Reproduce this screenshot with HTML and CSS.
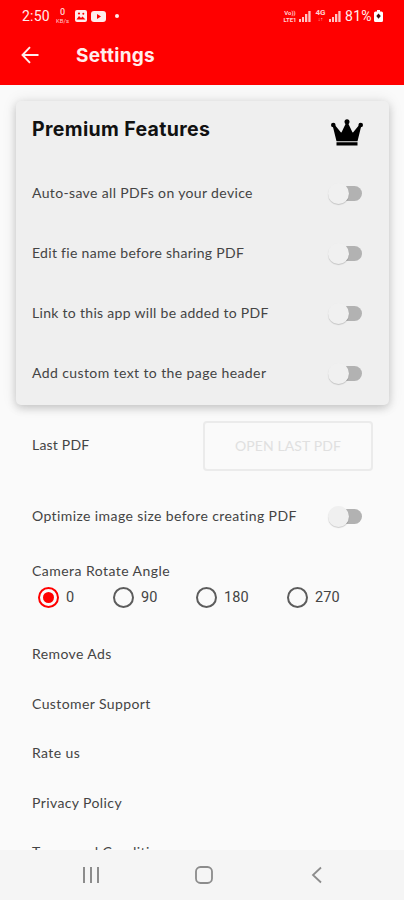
FILE: index.html
```
<!DOCTYPE html>
<html lang="en">
<head>
    <meta charset="UTF-8">
    <meta name="viewport" content="width=device-width, initial-scale=1.0">
    <title>Settings</title>
    <link rel="stylesheet" href="styles.css">
</head>
<body>

<header class="header">
    <div class="status-bar">
        <span class="time">2:50</span>
        <span class="speed"><b>0</b><small>KB/s</small></span>
        <svg class="icon-image" width="12" height="12" viewBox="0 0 12 12">
            <rect width="12" height="12" rx="2" fill="#ffeded"/>
            <path d="M1.5 9.5 4 6l2 2 1.5-1.5 3 3z" fill="#f00"/>
            <circle cx="4" cy="3.5" r="1.1" fill="#f00"/>
            <circle cx="8.3" cy="3.7" r="1" fill="#f00"/>
        </svg>
        <svg class="icon-video" width="15" height="11" viewBox="0 0 15 11">
            <rect width="15" height="11" rx="3" fill="#ffeded"/>
            <path d="M6 3v5l4-2.5z" fill="#f00"/>
        </svg>
        <span class="dot"></span>
        <span class="volte"><span>Vo))</span><span>LTE1</span></span>
        <svg class="signal" width="12" height="12" viewBox="0 0 12 12" fill="#ffc4c4">
            <path d="M0 9h2v3H0zM3 7h2v5H3zM6 4h2.300v8H6zM9.300 1h2.300v11H9.300z"/>
        </svg>
        <span class="net"><b>4G</b><small>↓↑</small></span>
        <svg class="signal signal-2" width="12" height="12" viewBox="0 0 12 12" fill="#ffc4c4">
            <path d="M0 9h2v3H0zM3 7h2v5H3zM6 4h2.300v8H6zM9.300 1h2.300v11H9.300z"/>
        </svg>
        <span class="percent">81%</span>
        <svg class="battery" width="9" height="12" viewBox="0 0 9 12">
            <path d="M3 0h3v1.500h1.500q1.500 0 1.500 1.500v7.500q0 1.500-1.500 1.500h-6Q0 12 0 10.500V3q0-1.500 1.500-1.500H3z" fill="#fff"/>
            <path d="M4.500 3.500 6.800 6 4.500 8.800 2.300 6z" fill="#401010"/>
        </svg>
    </div>
    <div class="toolbar">
        <svg width="18" height="18" viewBox="0 0 18 18" fill="none" stroke="#ffeded" stroke-width="1.900">
            <path d="M17.500 9H2M9 1.200 1.500 9 9 16.800"/>
        </svg>
        <h1>Settings</h1>
    </div>
</header>

<main class="content">
    <section class="card">
        <div class="card-title">
            <h2>Premium Features</h2>
            <svg width="32" height="27" viewBox="0 0 32 27">
                <path d="M1.500 6 3 5l7 8.500h12L29 5l1.500 1-4 16.300h-21z"/>
                <path d="M10 14.500 15 4h2l5 10.500zM5.500 23.300h21V26.500h-21z"/>
                <circle cx="2.300" cy="6" r="2.300"/>
                <circle cx="16" cy="2.700" r="2.500"/>
                <circle cx="29.700" cy="6" r="2.300"/>
            </svg>
        </div>
        <div class="row"><span class="save-label">Auto-save all PDFs on your device</span><span class="switch"></span></div>
        <div class="row"><span class="name-label">Edit fie name before sharing PDF</span><span class="switch"></span></div>
        <div class="row"><span class="link-label">Link to this app will be added to PDF</span><span class="switch"></span></div>
        <div class="row"><span class="header-label">Add custom text to the page header</span><span class="switch"></span></div>
    </section>

    <div class="last-pdf">
        <span>Last PDF</span>
        <button class="open-button" disabled>OPEN LAST PDF</button>
    </div>

    <div class="optimize"><span>Optimize image size before creating PDF</span><span class="switch"></span></div>

    <div class="angle-label">Camera Rotate Angle</div>
    <div class="angles">
        <span class="angle"><i class="radio checked"></i>0</span>
        <span class="angle"><i class="radio"></i>90</span>
        <span class="angle"><i class="radio"></i>180</span>
        <span class="angle"><i class="radio"></i>270</span>
    </div>

    <ul class="links">
        <li>Remove Ads</li>
        <li>Customer Support</li>
        <li>Rate us</li>
        <li>Privacy Policy</li>
        <li>Terms and Conditions</li>
    </ul>
</main>

<nav class="nav-bar">
    <svg width="18" height="18" viewBox="0 0 18 18" fill="none" stroke="#8c8c8c" stroke-width="2">
        <path d="M2 1v16M9 1v16M16 1v16"/>
    </svg>
    <svg width="18" height="18" viewBox="0 0 18 18" fill="none" stroke="#8c8c8c" stroke-width="1.800">
        <rect x="1" y="1" width="16" height="16" rx="4.500"/>
    </svg>
    <svg width="18" height="18" viewBox="0 0 18 18" fill="none" stroke="#8c8c8c" stroke-width="1.800">
        <path d="M13 1.500 5 9l8 7.500"/>
    </svg>
</nav>

</body>
</html>
```
FILE: styles.css
```
* {
    box-sizing: border-box;
}
body {
    margin: 0;
    height: 900px;
    display: flex;
    flex-direction: column;
    overflow: hidden;
    background: #fafafa;
    color: #444;
    font-family: Lato, sans-serif;
    font-size: 14px;
    letter-spacing: 0.4px;
}
svg {
    display: block;
    flex: none;
}
.header {
    flex: none;
    height: 85px;
    background: #ff0000;
    color: #ffeded;
}
.status-bar {
    display: flex;
    align-items: center;
    height: 32px;
    padding-left: 22px;
    font-family: Roboto, sans-serif;
    font-size: 14px;
    letter-spacing: 0;
}
.time {
    width: 33px;
    letter-spacing: 0.2px;
}
.speed, .volte, .net {
    display: flex;
    flex-direction: column;
    align-items: center;
    line-height: 6px;
    font-size: 6px;
    color: #ffd0d0;
}
.speed {
    width: 15px;
}
.speed b {
    font-size: 9px;
    line-height: 9px;
    font-weight: 500;
}
.speed small {
    font-size: 6px;
    line-height: 7px;
}
.icon-image {
    margin-left: 5px;
}
.icon-video {
    margin-left: 4px;
}
.dot {
    width: 4px;
    height: 4px;
    margin-left: 9px;
    border-radius: 50%;
    background: #ffeded;
}
.volte {
    width: 16px;
    margin-left: 163px;
    font-size: 6px;
    line-height: 7px;
    font-weight: 700;
}
.signal {
    margin-left: 1px;
}
.net {
    width: 11px;
    margin-left: 4px;
}
.net b {
    font-size: 8px;
}
.net small {
    font-size: 5px;
}
.signal-2 {
    margin-left: 3px;
}
.percent {
    width: 28px;
    margin-left: 4px;
    letter-spacing: 0.3px;
}
.battery {
    margin-left: 1px;
}
.toolbar {
    display: flex;
    align-items: center;
    height: 46px;
    padding-left: 21px;
}
.toolbar h1 {
    margin: 0 0 0 37px;
    font-family: Inter, sans-serif;
    font-size: 19px;
    font-weight: 700;
    letter-spacing: 0.3px;
}
.content {
    flex: 1;
    min-height: 0;
    overflow: hidden;
    padding: 16px 15px 0 16px;
}
.card {
    height: 304px;
    padding: 0 26px 0 16px;
    border-radius: 5px;
    background: #efefef;
    box-shadow: 0 3px 9px rgba(0, 0, 0, 0.18), 0 0 16px rgba(0, 0, 0, 0.09);
}
.card-title {
    display: flex;
    align-items: center;
    justify-content: space-between;
    height: 62px;
    padding-bottom: 5px;
}
.card-title svg {
    margin-top: 6px;
}
.card-title h2 {
    margin: 0;
    padding-bottom: 2px;
    color: #111;
    font-family: Inter, sans-serif;
    font-size: 19.5px;
    font-weight: 700;
    letter-spacing: 0.35px;
}
.row, .optimize {
    display: flex;
    align-items: center;
    justify-content: space-between;
    height: 60px;
}
.row span:first-child, .optimize span:first-child {
    padding-bottom: 2px;
}
.save-label {
    letter-spacing: 0.36px;
}
.name-label, .link-label {
    letter-spacing: 0.3px;
}
.header-label {
    letter-spacing: 0.4px;
}
/* disabled look: the thumb sits over the left end of the track */
.switch {
    position: relative;
    width: 28px;
    height: 15px;
    margin-right: 1px;
    border-radius: 8px;
    background: #b2b2b2;
}
.switch::before {
    content: "";
    position: absolute;
    left: -6px;
    top: -3px;
    width: 21px;
    height: 21px;
    border-radius: 50%;
    background: #f0f0f0;
    box-shadow: 0 1px 1px rgba(0, 0, 0, 0.18);
}
.last-pdf {
    display: flex;
    align-items: center;
    justify-content: space-between;
    height: 50px;
    margin-top: 16px;
    padding: 0 16px;
    letter-spacing: 0.2px;
}
.last-pdf span {
    padding-bottom: 3px;
}
.open-button {
    width: 170px;
    height: 50px;
    padding: 0 0 2px;
    border: 2px solid #ebebeb;
    border-radius: 4px;
    background: #fafafa;
    color: #e0e0e0;
    font-family: Lato, sans-serif;
    font-size: 14px;
    letter-spacing: 0.1px;
}
.optimize {
    margin-top: 15px;
    padding: 0 26px 0 16px;
}
.angle-label {
    margin-top: 15px;
    padding-left: 16px;
    line-height: 20px;
    letter-spacing: 0.45px;
}
.angles {
    display: grid;
    grid-template-columns: 75px 83px 91px 80px;
    height: 32px;
    padding-left: 22px;
}
.angle {
    display: flex;
    align-items: center;
    gap: 7px;
    font-family: Roboto, sans-serif;
    font-size: 14.5px;
    letter-spacing: 0.1px;
}
.radio {
    display: flex;
    align-items: center;
    justify-content: center;
    width: 21px;
    height: 21px;
    border: 2px solid #5c5c5c;
    border-radius: 50%;
}
.radio.checked {
    border-color: #f00;
}
.radio.checked::before {
    content: "";
    width: 11px;
    height: 11px;
    border-radius: 50%;
    background: #f00;
}
.links {
    margin: 16px 0 0;
    padding: 0 0 0 16px;
    list-style: none;
}
.links li {
    height: 49.500px;
    line-height: 49px;
}
.nav-bar {
    display: flex;
    align-items: center;
    flex: none;
    gap: 95px;
    height: 50px;
    padding-left: 82px;
    background: #f5f5f5;
}
```
